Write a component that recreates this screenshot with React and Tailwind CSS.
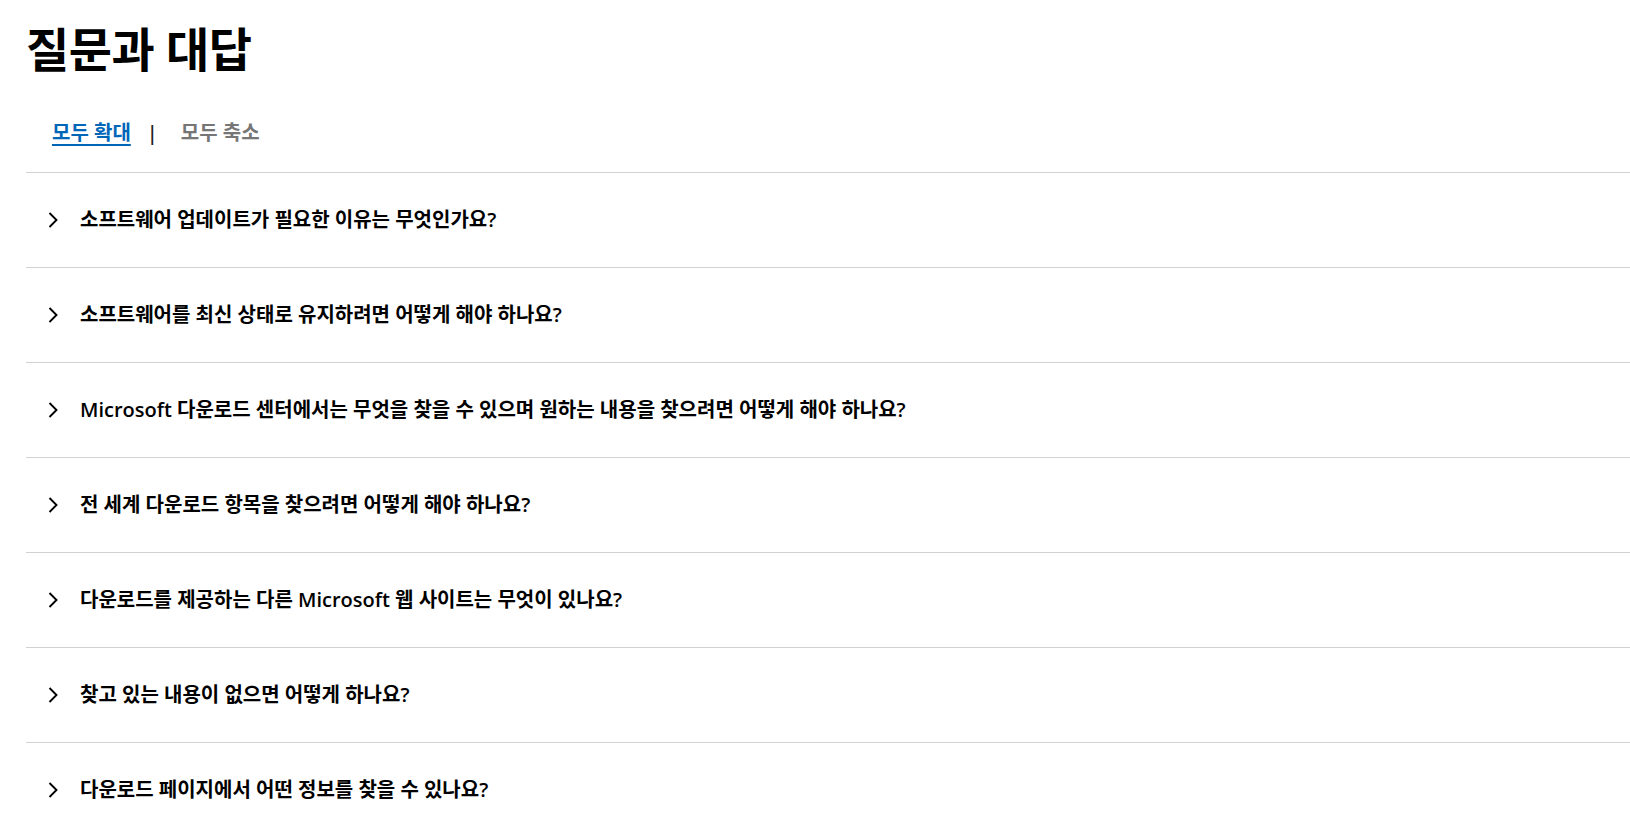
const questions = [
  "소프트웨어 업데이트가 필요한 이유는 무엇인가요?",
  "소프트웨어를 최신 상태로 유지하려면 어떻게 해야 하나요?",
  "Microsoft 다운로드 센터에서는 무엇을 찾을 수 있으며 원하는 내용을 찾으려면 어떻게 해야 하나요?",
  "전 세계 다운로드 항목을 찾으려면 어떻게 해야 하나요?",
  "다운로드를 제공하는 다른 Microsoft 웹 사이트는 무엇이 있나요?",
  "찾고 있는 내용이 없으면 어떻게 하나요?",
  "다운로드 페이지에서 어떤 정보를 찾을 수 있나요?",
];

function Chevron() {
  return (
    <svg className="w-[10px] h-[16px] shrink-0" viewBox="0 0 10 16" fill="none">
      <path d="M1.5 1 L8.5 8 L1.5 15" stroke="#000" strokeWidth="1.9" />
    </svg>
  );
}

export default function App() {
  return (
    <div
      className="min-h-screen bg-white text-black pl-[26px] overflow-hidden"
      style={{ fontFamily: '"Open Sans", "Noto Sans CJK KR", sans-serif' }}
    >
      <h1 className="pt-[19px] text-[47px] leading-[60px] font-bold tracking-[-0.5px]">질문과 대답</h1>

      <div className="flex items-center pl-[26px] pt-[42px] pb-[27px] text-[20px] leading-[24px] font-semibold">
        <button className="text-[#0067b8] underline underline-offset-[4px] decoration-[2px]">모두 확대</button>
        <span className="ml-[16px] mr-[23px] text-[#222]">|</span>
        <button className="text-[#767676]">모두 축소</button>
      </div>

      <div>
        {questions.map((q) => (
          <div key={q} className="border-t border-[#d2d2d2] h-[95px] flex items-center pl-[22px] gap-[22px]">
            <Chevron />
            <span className="text-[20px] font-semibold leading-[26px]">{q}</span>
          </div>
        ))}
      </div>
    </div>
  );
}
